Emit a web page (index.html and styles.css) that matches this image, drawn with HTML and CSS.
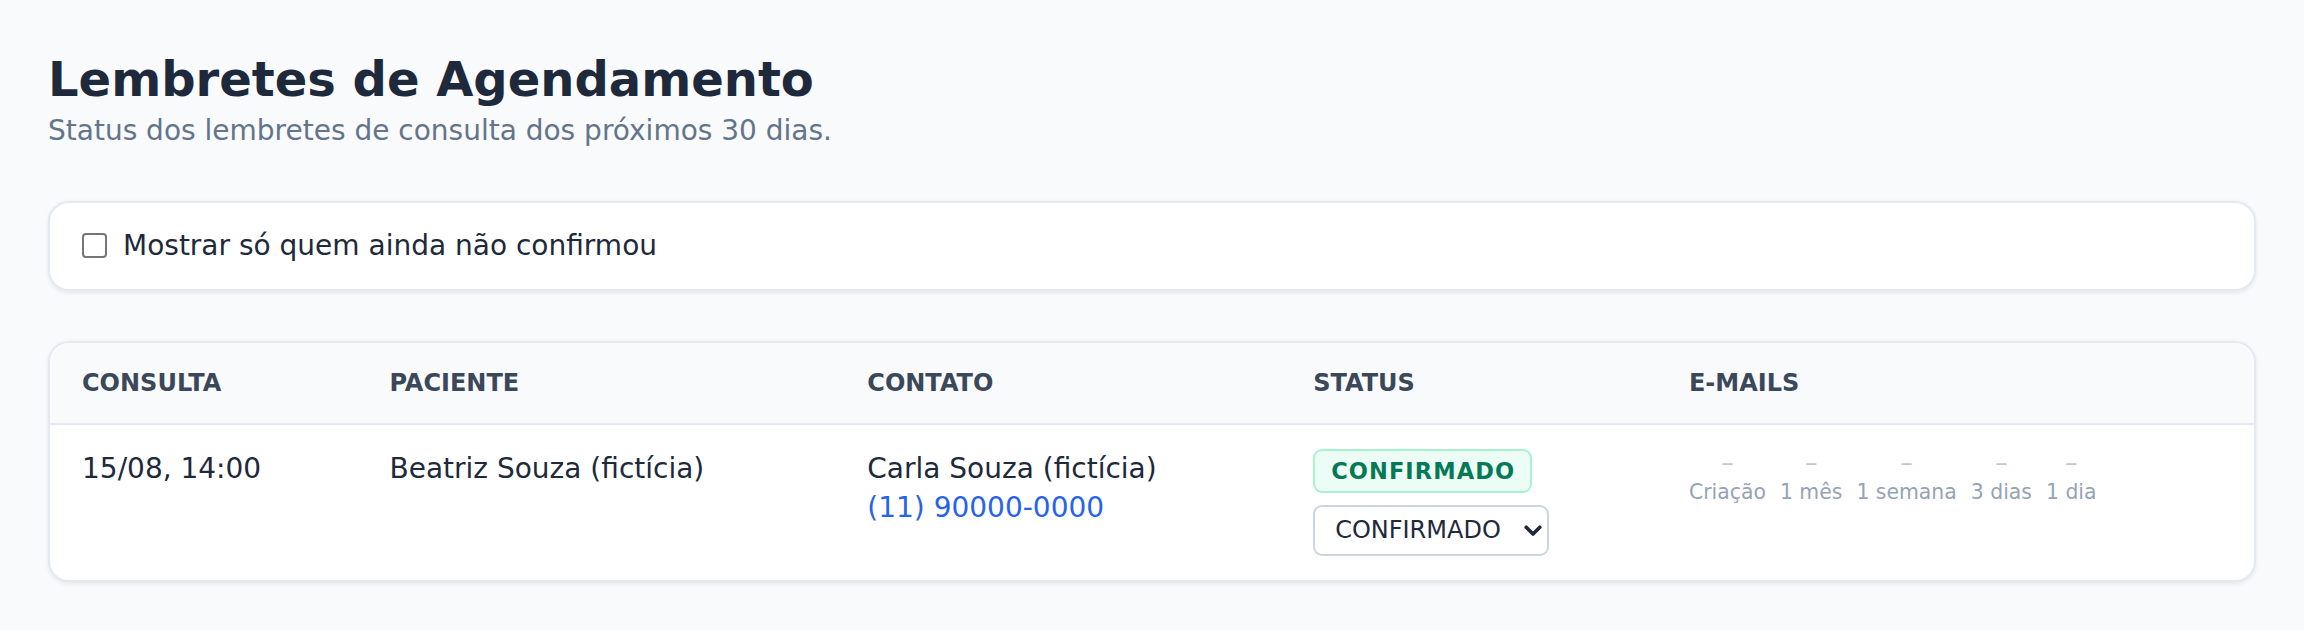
FILE: index.html
```html
<!DOCTYPE html>
<html lang="pt-BR">
<head>
<meta charset="utf-8">
<title>Lembretes de Agendamento</title>
<link rel="stylesheet" href="styles.css">
</head>
<body>
<main class="page">
  <header class="page-header">
    <h1 class="title">Lembretes de Agendamento</h1>
    <p class="subtitle">Status dos lembretes de consulta dos próximos 30 dias.</p>
  </header>

  <section class="card filter-card">
    <label class="filter">
      <input type="checkbox" class="filter-check">
      <span>Mostrar só quem ainda não confirmou</span>
    </label>
  </section>

  <section class="card table-card">
    <table class="table">
      <thead>
        <tr>
          <th class="col-consulta">Consulta</th>
          <th class="col-paciente">Paciente</th>
          <th class="col-contato">Contato</th>
          <th class="col-status">Status</th>
          <th class="col-emails">E-mails</th>
        </tr>
      </thead>
      <tbody>
        <tr>
          <td>15/08, 14:00</td>
          <td>Beatriz Souza (fictícia)</td>
          <td>
            <div>Carla Souza (fictícia)</div>
            <a class="phone" href="#">(11) 90000-0000</a>
          </td>
          <td>
            <div class="status-cell">
              <span class="badge">CONFIRMADO</span>
              <span class="select-wrap">
                <select class="status-select">
                  <option>CONFIRMADO</option>
                  <option>PENDENTE</option>
                  <option>CANCELADO</option>
                </select>
                <svg class="chevron" viewBox="0 0 18 12" width="18" height="12" aria-hidden="true">
                  <path d="M2.2 2.2 L9 9 L15.8 2.2" fill="none" stroke="#1e293b" stroke-width="3.6" stroke-linecap="round" stroke-linejoin="round"/>
                </svg>
              </span>
            </div>
          </td>
          <td>
            <div class="emails">
              <div class="email-step"><span class="dash">–</span><span class="step-label">Criação</span></div>
              <div class="email-step"><span class="dash">–</span><span class="step-label">1 mês</span></div>
              <div class="email-step"><span class="dash">–</span><span class="step-label">1 semana</span></div>
              <div class="email-step"><span class="dash">–</span><span class="step-label">3 dias</span></div>
              <div class="email-step"><span class="dash">–</span><span class="step-label">1 dia</span></div>
            </div>
          </td>
        </tr>
      </tbody>
    </table>
  </section>
</main>
</body>
</html>
```

FILE: styles.css
```css
* { box-sizing: border-box; }

html, body {
  margin: 0;
  padding: 0;
  background: #f8fafc;
}

body {
  font-family: "DejaVu Sans", sans-serif;
  color: #1e293b;
  font-size: 28px;
  line-height: 1.5;
}

.page {
  padding: 51px 48px 48px;
}

.page-header {
  margin-bottom: 49px;
}

.title {
  margin: 0;
  font-size: 48px;
  line-height: 1.2;
  font-weight: 700;
  color: #1e293b;
}

.subtitle {
  margin: 1px 0 0;
  font-size: 28px;
  line-height: 42px;
  color: #64748b;
}

.card {
  background: #ffffff;
  border: 2px solid #e5eaf1;
  border-radius: 21px;
  box-shadow: 0 1.5px 4px rgba(15, 23, 42, 0.08);
}

.filter-card {
  padding: 22px 32px;
  margin-bottom: 50px;
}

.filter {
  display: flex;
  align-items: center;
  gap: 16px;
  font-size: 28px;
  line-height: 42px;
  color: #1e293b;
}

.filter-check {
  appearance: none;
  -webkit-appearance: none;
  width: 25px;
  height: 25px;
  margin: 0;
  border: 2px solid #767676;
  border-radius: 4px;
  background: #ffffff;
  flex: none;
}

.table-card {
  overflow: hidden;
}

.table {
  width: 100%;
  border-collapse: collapse;
}

.table th {
  background: #f8fafc;
  text-align: left;
  font-size: 24px;
  line-height: 32px;
  font-weight: 700;
  text-transform: uppercase;
  color: #3b4859;
  padding: 24px 32px;
  border-bottom: 2px solid #e5eaf1;
}

.col-consulta { width: 13.95%; }
.col-paciente { width: 21.68%; }
.col-contato { width: 20.23%; }
.col-status { width: 17.05%; }
.col-emails { width: 27.09%; }

.table td {
  vertical-align: top;
  padding: 24px 32px;
  font-size: 28px;
  line-height: 39.5px;
  color: #1e293b;
}

.phone {
  color: #2563eb;
  text-decoration: none;
}

.status-cell {
  display: flex;
  flex-direction: column;
  align-items: flex-start;
  gap: 12px;
}

.badge {
  display: inline-block;
  padding: 7px 15px 7px 16px;
  font-size: 22.5px;
  line-height: 26px;
  font-weight: 700;
  letter-spacing: 1.1px;
  color: #047857;
  background: #ecfdf5;
  border: 2px solid #a7f3d0;
  border-radius: 9px;
}

.select-wrap {
  position: relative;
  display: inline-block;
}

.status-select {
  appearance: none;
  -webkit-appearance: none;
  height: 51px;
  font-family: "DejaVu Sans", sans-serif;
  font-size: 24px;
  color: #1e293b;
  background: #ffffff;
  border: 2px solid #cbd5e1;
  border-radius: 9px;
  padding: 0 46px 0 20px;
}

.chevron {
  position: absolute;
  right: 7px;
  top: 20px;
  pointer-events: none;
}

.emails {
  display: flex;
  gap: 14px;
}

.email-step {
  display: flex;
  flex-direction: column;
  align-items: center;
}

.dash {
  font-size: 25px;
  line-height: 28px;
  color: #bcc8d7;
}

.step-label {
  margin-top: 0.5px;
  font-size: 20.4px;
  line-height: 30px;
  color: #94a3b8;
}
```
